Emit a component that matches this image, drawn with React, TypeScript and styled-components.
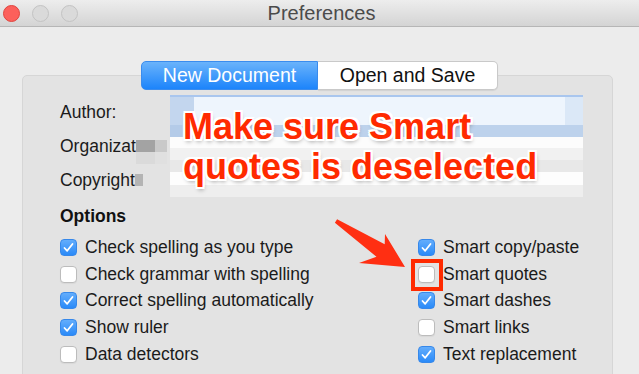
import React from "react";
import styled, { createGlobalStyle } from "styled-components";

const GlobalStyle = createGlobalStyle`
  html, body {
    margin: 0;
    padding: 0;
    background: #ececec;
  }
  body {
    font-family: "Liberation Sans", Arial, sans-serif;
    color: #1e1e1e;
  }
`;

const Window = styled.div`
  position: relative;
  width: 639px;
  height: 374px;
  overflow: hidden;
  background: #ececec;
  display: flex;
  flex-direction: column;
`;

const TitleBar = styled.div`
  flex: none;
  height: 26px;
  display: grid;
  grid-template-columns: 1fr auto 1fr;
  align-items: center;
  background: linear-gradient(#ededed, #d4d4d4);
  border-bottom: 1px solid #b6b6b6;
`;

const Lights = styled.div`
  display: flex;
  align-items: center;
  gap: 12px;
  padding-left: 3px;
`;

const Light = styled.span<{ $color: string; $edge: string }>`
  width: 17px;
  height: 17px;
  border-radius: 50%;
  box-sizing: border-box;
  background: ${(p) => p.$color};
  border: 1px solid ${(p) => p.$edge};
`;

const Title = styled.div`
  font-size: 20px;
  color: #4b4b4b;
  line-height: 26px;
  margin-left: 4px;
`;

const Body = styled.div`
  flex: 1;
  display: flex;
  flex-direction: column;
  padding: 34px 26px 0 22px;
`;

const Tabs = styled.div`
  position: relative;
  z-index: 1;
  align-self: center;
  margin-left: 4px;
  margin-bottom: -15px;
  display: flex;
  height: 29px;
`;

const Tab = styled.div<{ $active?: boolean; $w: number }>`
  box-sizing: border-box;
  width: ${(p) => p.$w}px;
  display: flex;
  align-items: center;
  justify-content: center;
  font-size: 19.5px;
  ${(p) =>
    p.$active
      ? `
    color: #fff;
    background: linear-gradient(#6ab3fb, #1c84fb);
    border: 1px solid #3a8cee;
    border-radius: 5px 0 0 5px;
  `
      : `
    color: #111;
    background: #fff;
    border: 1px solid #c9c9c9;
    border-left: none;
    border-radius: 0 5px 5px 0;
    box-shadow: 0 1px 1px rgba(0,0,0,.08);
  `}
`;

const Group = styled.div`
  flex: 1;
  margin-bottom: -12px;
  border: 1px solid #d6d6d6;
  border-radius: 5px;
  background: #e3e3e3;
  padding: 19px 0 0 37px;
`;

const FormGrid = styled.div`
  display: grid;
  grid-template-columns: 110px 413px;
  grid-template-rows: repeat(3, 34px);
`;

const FieldLabel = styled.div`
  grid-column: 1;
  display: flex;
  align-items: center;
  font-size: 17.5px;
  color: #1b1b1b;
`;

const Pixel = styled.span<{ $w: number; $h: number; $c: string; $below?: string }>`
  display: inline-block;
  width: ${(p) => p.$w}px;
  height: ${(p) => p.$h}px;
  background: ${(p) => p.$c};
  ${(p) => (p.$below ? `box-shadow: 0 ${p.$h}px 0 ${p.$below};` : "")}
`;

const Fields = styled.div`
  grid-column: 2;
  grid-row: 1 / span 3;
  position: relative;
  display: flex;
  flex-direction: column;
  border-top: 2px solid #a9c6ee;
`;

const Stripe = styled.div<{ $h: number; $c: string }>`
  height: ${(p) => p.$h}px;
  background: ${(p) => p.$c};
  display: flex;
  justify-content: space-between;
`;

const Callout = styled.div`
  position: absolute;
  left: 13px;
  top: 10px;
  font-size: 36px;
  font-weight: 700;
  line-height: 40px;
  color: #ff2a00;
  white-space: nowrap;
  text-shadow: -2px -2px 0 #fff, 2px -2px 0 #fff, -2px 2px 0 #fff,
    2px 2px 0 #fff, 0 2px 0 #fff, 0 -2px 0 #fff, 2px 0 0 #fff, -2px 0 0 #fff,
    1px 3px 4px rgba(0, 0, 0, 0.35);
`;

const Heading = styled.div`
  margin-top: 8px;
  font-size: 17.5px;
  font-weight: 700;
  line-height: 22px;
  color: #111;
`;

const Columns = styled.div`
  display: grid;
  grid-template-columns: 358px auto;
  margin-top: 7px;
`;

const List = styled.div`
  display: flex;
  flex-direction: column;
`;

const Row = styled.div`
  height: 26.7px;
  display: flex;
  align-items: center;
  gap: 8px;
  font-size: 17.5px;
  color: #1b1b1b;
`;

const Box = styled.span<{ $checked?: boolean }>`
  position: relative;
  box-sizing: border-box;
  width: 17px;
  height: 17px;
  border-radius: 4px;
  display: flex;
  align-items: center;
  justify-content: center;
  ${(p) =>
    p.$checked
      ? `
    background: linear-gradient(#63adfc, #2a8af8);
    border: 1px solid #3688ea;
  `
      : `
    background: #fff;
    border: 1px solid #bcbcbc;
    box-shadow: 0 1px 1px rgba(0,0,0,.05);
  `}
`;

const Highlight = styled.span`
  position: absolute;
  top: -8px;
  left: -8px;
  right: -9px;
  bottom: -9px;
  border: 4px solid #ff2a00;
`;

const Overlay = styled.svg`
  position: absolute;
  left: 0;
  top: 0;
  pointer-events: none;
`;

function Checkbox({ checked, marked }: { checked?: boolean; marked?: boolean }) {
  return (
    <Box $checked={checked}>
      {checked && (
        <svg width="13" height="13" viewBox="0 0 13 13">
          <polyline
            points="2.5,7 5.2,9.8 10.5,3"
            fill="none"
            stroke="#fff"
            strokeWidth="1.8"
            strokeLinecap="round"
            strokeLinejoin="round"
          />
        </svg>
      )}
      {marked && <Highlight />}
    </Box>
  );
}

const leftOptions = [
  { label: "Check spelling as you type", checked: true },
  { label: "Check grammar with spelling", checked: false },
  { label: "Correct spelling automatically", checked: true },
  { label: "Show ruler", checked: true },
  { label: "Data detectors", checked: false },
];

const rightOptions = [
  { label: "Smart copy/paste", checked: true },
  { label: "Smart quotes", checked: false, marked: true },
  { label: "Smart dashes", checked: true },
  { label: "Smart links", checked: false },
  { label: "Text replacement", checked: true },
];

type Option = { label: string; checked: boolean; marked?: boolean };

function OptionList({ items }: { items: Option[] }) {
  return (
    <List>
      {items.map((o) => (
        <Row key={o.label}>
          <Checkbox checked={o.checked} marked={o.marked} />
          <span>{o.label}</span>
        </Row>
      ))}
    </List>
  );
}

export default function App() {
  return (
    <>
      <GlobalStyle />
      <Window>
        <TitleBar>
          <Lights>
            <Light $color="#fc605b" $edge="#e0443e" />
            <Light $color="#dadada" $edge="#c3c3c3" />
            <Light $color="#dadada" $edge="#c3c3c3" />
          </Lights>
          <Title>Preferences</Title>
          <div />
        </TitleBar>
        <Body>
          <Tabs>
            <Tab $active $w={177}>New Document</Tab>
            <Tab $w={180}>Open and Save</Tab>
          </Tabs>
          <Group>
            <FormGrid>
              <FieldLabel>Author:</FieldLabel>
              <FieldLabel>
                Organizat
                <Pixel $w={19} $h={12} $c="#a3a3a3" $below="#dadada" />
                <Pixel $w={12} $h={12} $c="#c9c9c9" $below="#e0e0e0" />
              </FieldLabel>
              <FieldLabel>
                Copyright
                <Pixel $w={8} $h={12} $c="#b4b4b4" />
              </FieldLabel>
              <Fields>
                <Stripe $h={28} $c="#eef5fd">
                  <Pixel $w={24} $h={28} $c="#c3d6ee" />
                  <Pixel $w={18} $h={28} $c="#dbe8f7" />
                </Stripe>
                <Stripe $h={12} $c="#bdd2ec">
                  <Pixel $w={12} $h={12} $c="#b4cbe8" />
                </Stripe>
                <Stripe $h={11} $c="#fcfcfc" />
                <Stripe $h={12} $c="#f1f1f1" />
                <Stripe $h={12} $c="#e8e8e8" />
                <Stripe $h={13} $c="#fdfdfd" />
                <Stripe $h={12} $c="#eeeeee" />
                <Callout>
                  Make sure Smart
                  <br />
                  quotes is deselected
                </Callout>
              </Fields>
            </FormGrid>
            <Heading>Options</Heading>
            <Columns>
              <OptionList items={leftOptions} />
              <OptionList items={rightOptions} />
            </Columns>
          </Group>
        </Body>
        <Overlay width="639" height="374" viewBox="0 0 639 374">
          <path
            d="M334.9 222.7 L376.5 256.8 L359 263 L405 267 L385 234 L384.7 244.2 L337.1 219.3 Z"
            fill="#ff2f12"
          />
        </Overlay>
      </Window>
    </>
  );
}
